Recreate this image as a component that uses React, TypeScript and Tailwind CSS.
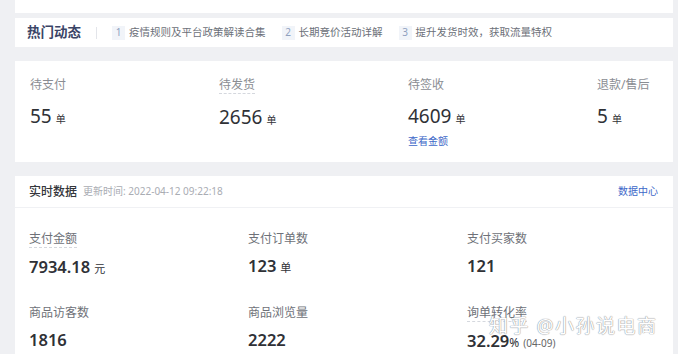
import type { ReactNode } from "react";

const font = { fontFamily: '"Noto Sans", "Noto Sans CJK SC", sans-serif' };

type Pending = { label: string; value: string; dotted?: boolean; link?: string };

const pending: Pending[] = [
  { label: "待支付", value: "55" },
  { label: "待发货", value: "2656", dotted: true },
  { label: "待签收", value: "4609", link: "查看金额" },
  { label: "退款/售后", value: "5" },
];

type Metric = { label: string; value: string; unit?: string; dotted?: boolean; extra?: ReactNode };

const metrics: Metric[] = [
  { label: "支付金额", value: "7934.18", unit: "元", dotted: true },
  { label: "支付订单数", value: "123", unit: "单" },
  { label: "支付买家数", value: "121" },
  { label: "商品访客数", value: "1816" },
  { label: "商品浏览量", value: "2222" },
  {
    label: "询单转化率",
    value: "32.29",
    dotted: true,
    extra: (
      <>
        <span className="text-[12px] font-normal">%</span>
        <span className="ml-1 text-[10px] font-normal text-[#666]">(04-09)</span>
      </>
    ),
  },
];

const topics = ["疫情规则及平台政策解读合集", "长期竞价活动详解", "提升发货时效，获取流量特权"];

export default function App() {
  return (
    <div className="relative h-[354px] w-[678px] overflow-hidden bg-[#eff0f3]" style={font}>
      <div className="flex flex-col pl-[15px] pr-[5px]">
        <div className="h-[13px] bg-white" />

        <div className="mt-[5px] flex h-[29px] items-center bg-white pl-[12px]">
          <span className="text-[13.5px] font-bold text-[#3a4466]">热门动态</span>
          <span className="mx-[15px] h-[12px] w-px bg-[#e3e5ea]" />
          <div className="flex items-center gap-[16px]">
            {topics.map((t, i) => (
              <div key={t} className="flex items-center gap-[4px]">
                <span className="flex h-[14px] w-[13px] items-center justify-center bg-[#f1f4f9] text-[10px] text-[#8fa0bf]">
                  {i + 1}
                </span>
                <span className="text-[10.5px] text-[#6b6f78]">{t}</span>
              </div>
            ))}
          </div>
        </div>

        <div className="mt-[14px] h-[101px] overflow-hidden bg-white pl-[15px] pt-[16px]">
          <div className="grid grid-cols-[189px_189px_189px_189px]">
            {pending.map((p) => (
              <div key={p.label} className="flex flex-col">
                <span
                  className={`self-start text-[12px] leading-[16px] text-[#8a8d93] ${
                    p.dotted ? "border-b border-dashed border-[#d5d8de]" : ""
                  }`}
                >
                  {p.label}
                </span>
                <div className="mt-[10px] flex items-baseline leading-[26px]">
                  <span className="text-[19px] text-[#2f3136]">{p.value}</span>
                  <span className="ml-[4px] text-[10px] text-[#2f3136]">单</span>
                </div>
                {p.link && (
                  <span className="mt-[2px] text-[10px] leading-[14px] text-[#3d67c8]">{p.link}</span>
                )}
              </div>
            ))}
          </div>
        </div>

        <div className="mt-[14px] h-[180px] bg-white">
          <div className="flex h-[32px] items-center border-b border-[#f0f1f4] pl-[14px] pr-[15px]">
            <span className="text-[12px] font-medium text-[#33353a]">实时数据</span>
            <span className="ml-[6px] text-[10px] text-[#a9acb3]">更新时间: 2022-04-12 09:22:18</span>
            <span className="ml-auto text-[10px] text-[#3d67c8]">数据中心</span>
          </div>
          <div className="grid grid-cols-[219px_219px_219px] gap-y-[23px] pl-[14px] pt-[22px]">
            {metrics.map((m) => (
              <div key={m.label} className="flex flex-col">
                <span
                  className={`self-start text-[12px] leading-[17px] text-[#6e7178] ${
                    m.dotted ? "border-b border-dashed border-[#d5d8de]" : ""
                  }`}
                >
                  {m.label}
                </span>
                <div className="mt-[7px] flex items-baseline leading-[24px] text-[#2f3136]">
                  <span className="text-[16.5px] font-semibold">{m.value}</span>
                  {m.unit && <span className="ml-[4px] text-[11px]">{m.unit}</span>}
                  {m.extra}
                </div>
              </div>
            ))}
          </div>
        </div>
      </div>

      <div className="absolute left-[489px] top-[314px] text-[19px] leading-[24px] tracking-[1.5px] text-white [text-shadow:0_0_1px_#8d9097,0_0_1px_#8d9097]">
        知乎 @小孙说电商
      </div>
    </div>
  );
}
